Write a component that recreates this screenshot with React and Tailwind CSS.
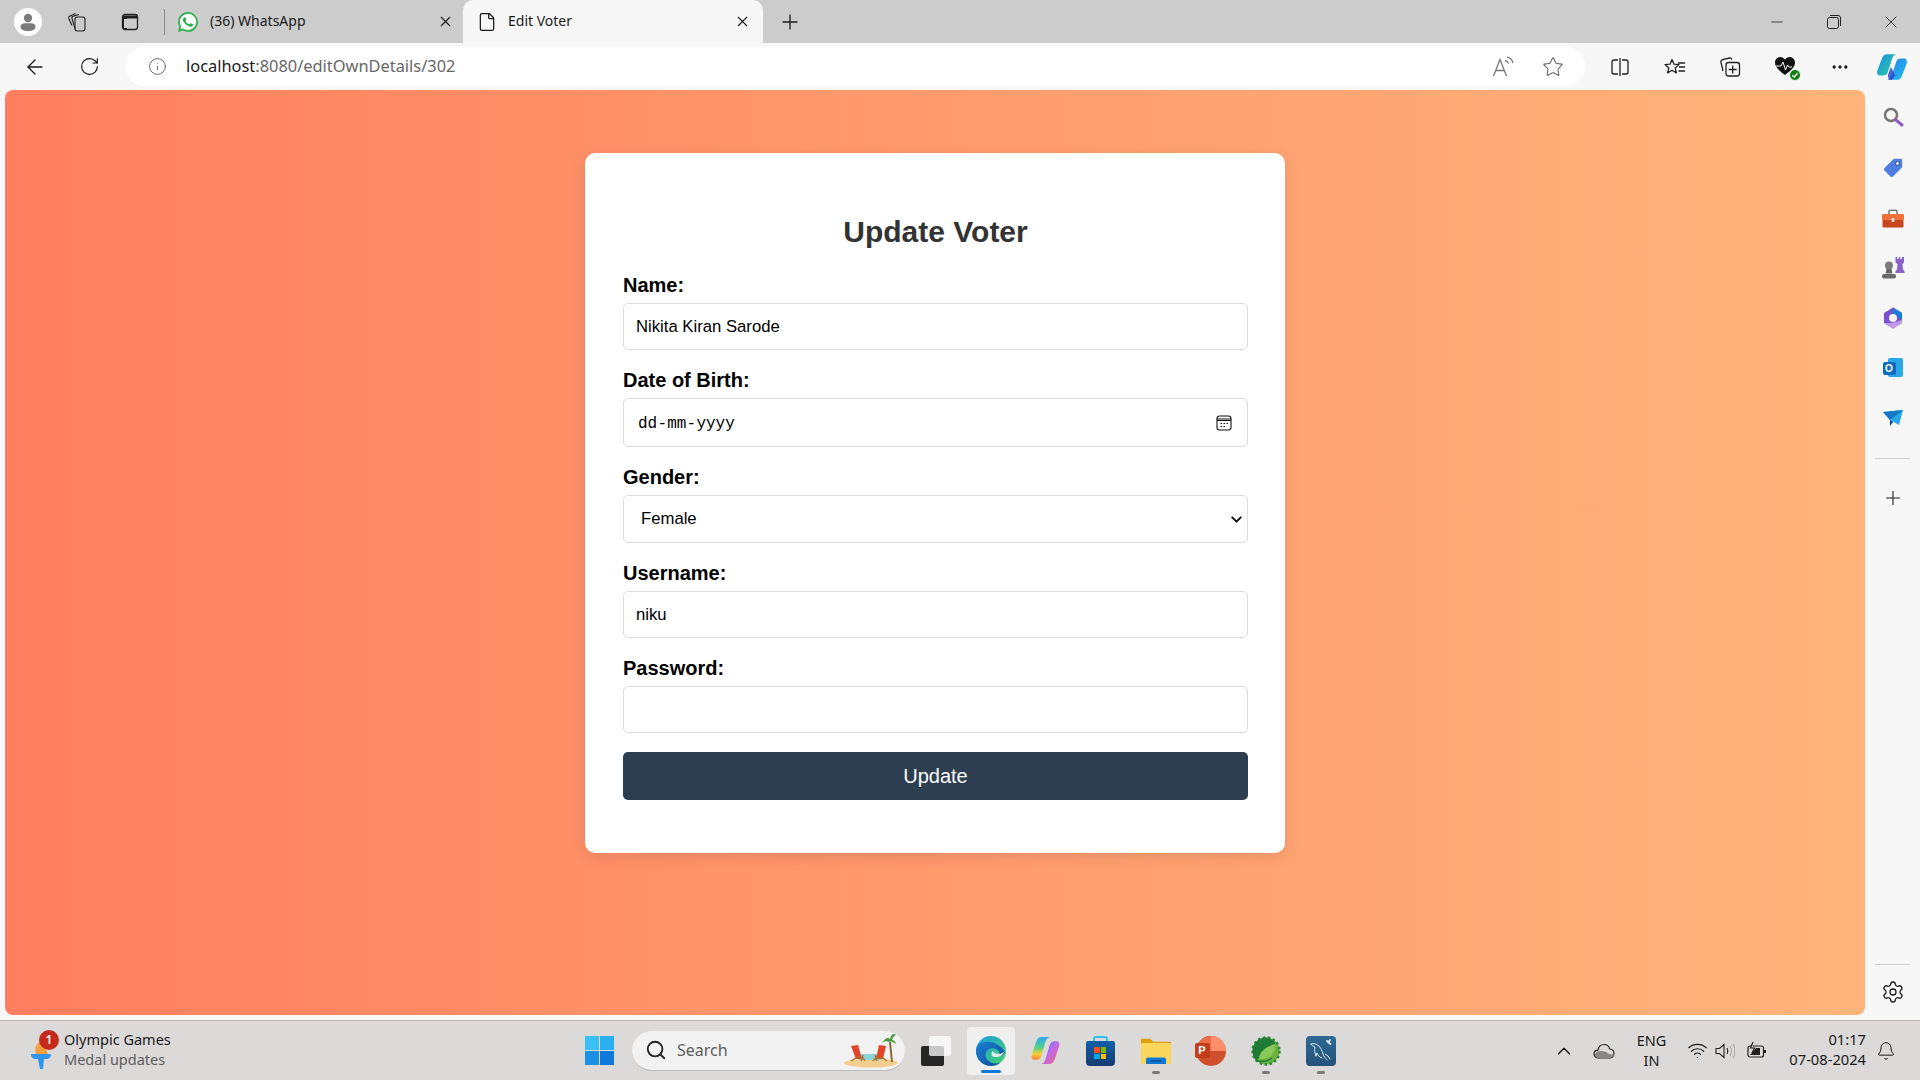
import React from 'react';
import { ArrowLeft, RotateCw, Info, Star, X, Plus, Minus, Ellipsis, Bell, ChevronUp, ChevronDown, Wifi, Search, File, Settings } from 'lucide-react';
import { SiWhatsapp } from 'react-icons/si';

const Slot = ({ w = 'w-[55px]', children }) => (
    <div className={`${w} h-full flex items-center justify-center shrink-0`}>{children}</div>
);

function Profile() {
    return (
        <div className="w-[28px] h-[28px] rounded-full bg-white flex items-center justify-center">
            <svg width="20" height="20" viewBox="0 0 20 20" fill="#7b7b7b">
                <circle cx="10" cy="6" r="4.2" />
                <path d="M2.5 15c0-2.6 2-3.8 4-3.8h7c2 0 4 1.2 4 3.8 0 2.6-3.500 4-7.500 4s-7.500-1.400-7.500-4z" />
            </svg>
        </div>
    );
}

function Workspaces() {
    return (
        <svg width="22" height="22" viewBox="0 0 22 22" fill="none" stroke="#222" strokeWidth="1.100">
            <rect x="9" y="6" width="10" height="14" rx="2.500" fill="#ccc" />
            <path d="M9 17.500 6 7.500C5.700 6.300 6.200 5.400 7.300 5.100L13 3.500" />
            <path d="M6 14.500 2.800 7.500c-.4-1.100.1-2 1.100-2.400L9.500 2.500" />
        </svg>
    );
}

function TabsIcon() {
    return (
        <svg width="18" height="18" viewBox="0 0 18 18" fill="none" stroke="#222" strokeWidth="1.300">
            <rect x="1.500" y="1.500" width="15" height="15" rx="2.500" />
            <path d="M2 2.500h14v3H6v10.500H2z" fill="#222" stroke="none" />
            <rect x="3" y="6" width="3" height="9" fill="#ccc" stroke="none" />
        </svg>
    );
}

function ReadAloud() {
    return (
        <svg width="24" height="22" viewBox="0 0 24 22" fill="none" stroke="#777" strokeWidth="1.300">
            <path d="M1.500 20 8 3.500 14.500 20M3.800 14.500h8.500" />
            <path d="M13 4.500c1.600.3 2.900 1.400 3.500 3M15 1.200c3 .5 5.300 2.800 6 6" />
        </svg>
    );
}

function SplitIcon() {
    return (
        <svg width="20" height="20" viewBox="0 0 20 20" fill="none" stroke="#222" strokeWidth="1.300">
            <path d="M8 3H4C2.700 3 2 3.800 2 5v10c0 1.200.7 2 2 2h4" />
            <path d="M12 3h4c1.300 0 2 .8 2 2v10c0 1.200-.7 2-2 2h-4" />
            <path d="M10 1v18" />
        </svg>
    );
}

function Favorites() {
    return (
        <svg width="22" height="20" viewBox="0 0 22 20" fill="none" stroke="#222" strokeWidth="1.300" strokeLinejoin="round">
            <path d="M8 2.500 10 7.200l5 .4-3.800 3.300 1.200 5L8 13.200l-4.400 2.700 1.200-5L1 7.600l5-.4z" />
            <path d="M14 6h7M15 10h6M14.500 14h6.500" />
        </svg>
    );
}

function Collections() {
    return (
        <svg width="22" height="22" viewBox="0 0 22 22" fill="none" stroke="#222" strokeWidth="1.300">
            <path d="M4 15 2 6.500C1.700 5 2.500 4 3.800 3.700L10.500 2c1.200-.2 2 .2 2.500 1.500" />
            <rect x="7" y="6.500" width="13.500" height="13.500" rx="2.500" fill="#f7f7f7" />
            <path d="M13.700 9.500v8M9.700 13.500h8" />
        </svg>
    );
}

function Health() {
    return (
        <div className="relative w-[24px] h-[24px] ml-[2px]">
            <svg width="22" height="20" viewBox="0 0 22 20" className="absolute left-0 top-[1px]">
                <path d="M11 19C5 14.500 1 11 1 6.500 1 3.500 3.300 1 6.200 1 8.200 1 10 2 11 3.800 12 2 13.800 1 15.800 1 18.700 1 21 3.500 21 6.500 21 11 17 14.500 11 19z" fill="#111" />
                <path d="M2 10h5l2-4 2.500 8 2-5 1.500 2h3" fill="none" stroke="#f7f7f7" strokeWidth="1" />
            </svg>
            <div className="absolute right-[-3px] bottom-[-2px] w-[12px] h-[12px] rounded-full bg-[#107c10] border border-[#f7f7f7] flex items-center justify-center">
                <svg width="8" height="8" viewBox="0 0 8 8" fill="none" stroke="#fff" strokeWidth="1.300"><path d="M1.200 4.200 3.200 6 6.800 2" /></svg>
            </div>
        </div>
    );
}

function Copilot() {
    return (
        <svg width="32" height="32" viewBox="0 0 30 30">
            <defs>
                <linearGradient id="cpA" x1="0" y1="0" x2="1" y2="1">
                    <stop offset="0" stopColor="#1a8fe0" />
                    <stop offset="1" stopColor="#2ccfa5" />
                </linearGradient>
                <linearGradient id="cpB" x1="0" y1="0" x2="1" y2="1">
                    <stop offset="0" stopColor="#2a7fe8" />
                    <stop offset="1" stopColor="#20c0f0" />
                </linearGradient>
            </defs>
            <path d="M10 3h9c-3 1-4 4-5 8l-3 9c-.8 2.500-2.500 3-4.500 3H4C1.500 23 .5 21 1.200 18.500L5.500 7C6.500 4.300 8 3 10 3z" fill="url(#cpA)" />
            <path d="M20 27h-9c3-1 4-4 5-8l3-9c.8-2.500 2.500-3 4.500-3H26c2.500 0 3.500 2 2.800 4.500L24.500 23c-1 2.700-2.500 4-4.500 4z" fill="url(#cpB)" />
            <path d="M11 23l3-8 4 8-3 4h-3z" fill="#2848c8" opacity=".85" />
        </svg>
    );
}

function ColorCopilot() {
    return (
        <svg width="31" height="31" viewBox="0 0 30 30">
            <defs>
                <linearGradient id="ccA" x1="0" y1="0" x2="0" y2="1">
                    <stop offset="0" stopColor="#30a8f0" />
                    <stop offset=".45" stopColor="#50d088" />
                    <stop offset=".75" stopColor="#f8d030" />
                    <stop offset="1" stopColor="#f88040" />
                </linearGradient>
                <linearGradient id="ccB" x1="0" y1="0" x2="1" y2="1">
                    <stop offset="0" stopColor="#5080f8" />
                    <stop offset=".5" stopColor="#c068e8" />
                    <stop offset="1" stopColor="#f86868" />
                </linearGradient>
            </defs>
            <path d="M11 2h8c-3 1-4 4-5 8l-3 10c-.8 2.500-2.500 4-4.500 4H4.500C2 24 1 22 1.700 19.500L6 6.500C7 3.300 9 2 11 2z" fill="url(#ccA)" />
            <path d="M19 28h-8c3-1 4-4 5-8l3-10c.8-2.500 2.500-4 4.500-4h2c2.500 0 3.500 2 2.800 4.500L24 23.500C23 26.700 21 28 19 28z" fill="url(#ccB)" />
        </svg>
    );
}

function SideSearch() {
    return (
        <svg width="22" height="22" viewBox="0 0 22 22" fill="none">
            <circle cx="9" cy="9" r="6" stroke="#777" strokeWidth="2.500" />
            <path d="M14 14l6 5" stroke="#8a5cc8" strokeWidth="3" strokeLinecap="round" />
        </svg>
    );
}

function SideTag() {
    return (
        <svg width="22" height="22" viewBox="0 0 22 22" className="mt-[2px]">
            <path d="M11 2.500c.5-.5 1-.7 1.700-.7h6c1 0 1.500.6 1.500 1.500v6c0 .7-.2 1.200-.7 1.700l-8.500 8.500c-.8.8-1.800.8-2.600 0L2.500 13.600c-.8-.8-.8-1.800 0-2.600z" fill="#4f7ee0" />
            <circle cx="15.500" cy="6.500" r="2" fill="#fff" stroke="#23418e" strokeWidth="1" />
        </svg>
    );
}

function SideToolbox() {
    return (
        <svg width="24" height="22" viewBox="0 0 24 22" className="mt-[3px]">
            <path d="M8 6V3.500c0-.8.500-1.300 1.300-1.300h5.400c.8 0 1.300.5 1.300 1.300V6" fill="none" stroke="#777" strokeWidth="1.500" />
            <rect x="1" y="6" width="22" height="6.500" rx="1" fill="#f0703a" />
            <rect x="1.500" y="12" width="21" height="7.500" rx="1" fill="#c8471c" />
            <rect x="10.500" y="10" width="3" height="4" rx=".7" fill="#d8d8d8" />
        </svg>
    );
}

function SideChess() {
    return (
        <svg width="24" height="24" viewBox="0 0 24 24">
            <path d="M14.500 1h1.700v2h1.500V1h1.600v2H21V1h2v5.500l-1.500 1.500.5 5.500 1.500 1.500V17h-9v-2l1.500-1.500.5-5.500-2-1.500z" fill="#8a62c8" />
            <circle cx="8" cy="9.500" r="4" fill="#7c7c7c" />
            <path d="M5.500 13h5l1 4.500h-7z" fill="#666" />
            <rect x="1" y="18" width="14" height="4.500" rx="2" fill="#6a6a6a" />
        </svg>
    );
}

function SideM365() {
    return (
        <svg width="22" height="24" viewBox="0 0 22 24" fill="none">
            <path d="M11 1.500 20 7v10l-9 5.500L2 17V7z" fill="#7a50d0" />
            <path d="M11 1.500 20 7v7l-6-4-4-3z" fill="#1f7ad8" />
            <path d="M2 17l9 5.500 9-5.500v-3l-6 2-5 1z" fill="#c09ae8" />
            <circle cx="11" cy="12" r="4" fill="#f7f7f7" />
        </svg>
    );
}

function SideOutlook() {
    return (
        <div className="relative w-[20px] h-[20px]">
            <div className="absolute right-0 top-0 w-[15px] h-[19px] bg-[#28a8ea] rounded-[2px]" />
            <div className="absolute left-0 top-[4px] w-[13px] h-[13px] bg-[#0f6cbd] rounded-[2px] flex items-center justify-center text-white text-[10px] font-bold font-['Liberation_Sans',sans-serif]">O</div>
        </div>
    );
}

function SideSend() {
    return (
        <svg width="22" height="18" viewBox="0 0 22 18">
            <path d="M1 3 21 1 17 16 8 11z" fill="#28a8ea" />
            <path d="M1 3 21 1 8 11z" fill="#1579c8" />
            <path d="M8 11v6l3-4z" fill="#0b3e8a" />
        </svg>
    );
}

function SideItem({ children }) {
    return <div className="h-[50.200px] flex items-center justify-center shrink-0">{children}</div>;
}

function Field({ label, children }) {
    return (
        <div className="mb-[19px]">
            <label className="block h-[22px] leading-[22px] mb-[7px] text-[20px] font-bold text-black">{label}</label>
            {children}
        </div>
    );
}

function TextInput({ value, type = 'text' }) {
    return (
        <input
            type={type}
            value={value}
            readOnly
            className="block w-full h-[47px] px-[12px] bg-white border border-[#dddddd] rounded-[5px] text-[16.700px] text-black outline-none"
        />
    );
}

function UpdateCard() {
    return (
        <div className="w-[700px] h-[700px] bg-white rounded-[10px] pt-[62px] pl-[38px] pr-[37px] shadow-[0_4px_15px_rgba(0,0,0,0.1)] font-['Liberation_Sans',sans-serif]">
            <h1 className="h-[34px] leading-[34px] mb-[25px] text-[30px] font-bold text-center text-[#333333]">Update Voter</h1>
            <Field label="Name:">
                <TextInput value="Nikita Kiran Sarode" />
            </Field>
            <Field label="Date of Birth:">
                <div className="h-[49px] pl-[14px] pr-[15px] border border-[#dddddd] rounded-[5px] flex items-center justify-between">
                    <div className="flex text-[16px] text-black font-['Liberation_Mono',monospace] pt-[2px]">
                        <span>dd</span>
                        <span className="w-[10px] text-center">-</span>
                        <span>mm</span>
                        <span className="w-[10px] text-center">-</span>
                        <span>yyyy</span>
                    </div>
                    <svg width="16" height="16" viewBox="0 0 16 16" fill="none" stroke="#111" strokeWidth="1.100">
                        <rect x="1" y="1" width="14" height="14" rx="2.500" />
                        <path d="M1 4h14M1 5.500h14" />
                        <path d="M4.500 8.500h1.500M7.500 8.500h1.500M10.500 8.500h1.500M4.500 11.500h1.500M7.500 11.500h1.500" />
                    </svg>
                </div>
            </Field>
            <Field label="Gender:">
                <div className="relative">
                    <select defaultValue="Female" className="block w-full h-[48px] pl-[17px] pr-[12px] bg-white border border-[#dddddd] rounded-[5px] text-[16.700px] text-black outline-none appearance-none">
                        <option>Male</option>
                        <option>Female</option>
                        <option>Other</option>
                    </select>
                    <ChevronDown size={17} strokeWidth={2.800} color="#111" className="absolute right-[3px] top-[16px] pointer-events-none" />
                </div>
            </Field>
            <Field label="Username:">
                <div className="pb-0"><TextInput value="niku" /></div>
            </Field>
            <Field label="Password:">
                <TextInput value="" type="password" />
            </Field>
            <button className="block w-full h-[48px] pb-[1px] bg-[#2c3e50] rounded-[5px] text-[20px] text-white">Update</button>
        </div>
    );
}

function StartIcon() {
    return (
        <div className="grid grid-cols-2 gap-[1px] w-[29px] h-[29px]">
            <div className="bg-[#38c0f4]" />
            <div className="bg-[#2ab0f0]" />
            <div className="bg-[#1b90e4]" />
            <div className="bg-[#0f78d8]" />
        </div>
    );
}

function TaskView() {
    return (
        <div className="relative w-[30px] h-[30px]">
            <div className="absolute left-0 bottom-0 w-[23px] h-[20px] bg-[#262626] rounded-[2px]" />
            <div className="absolute right-0 top-0 w-[22px] h-[20px] bg-white/75 rounded-[2px]" />
        </div>
    );
}

function EdgeIcon() {
    return (
        <svg width="32" height="32" viewBox="0 0 32 32">
            <defs>
                <linearGradient id="edA" x1="0" y1="0" x2="1" y2="1">
                    <stop offset="0" stopColor="#1b9de2" />
                    <stop offset="1" stopColor="#45d36a" />
                </linearGradient>
                <linearGradient id="edB" x1="0" y1="0" x2="1" y2="1">
                    <stop offset="0" stopColor="#1d7ed4" />
                    <stop offset="1" stopColor="#0c4b9a" />
                </linearGradient>
            </defs>
            <circle cx="16" cy="16" r="15" fill="url(#edA)" />
            <path d="M1 16C1 24.300 7.700 31 16 31c3.500 0 6.500-1 9-3-4 1-9 .5-12-2.500-3-3-3.500-7-1-10 2-2.500 6-3 9-1.500 3 1.600 4 3.500 3 5.500-.6 1.200-1.800 1.800-3.500 1.500 3 .5 8-.5 9.500-4-1-2-7-10-16-10C6 6 1 10 1 16z" fill="url(#edB)" />
            <path d="M17 21c2 1.500 6 1.500 9-.3 1.500-1 2.800-2.500 3.500-4.700-1.200 2-3.600 3-6.500 2.800-2.400-.2-4.400-1.200-5.500-2.800-1 1.500-1.200 3.500-.5 5z" fill="#f0f0f0" opacity=".9" />
        </svg>
    );
}

function StoreIcon() {
    return (
        <div className="relative w-[30px] h-[30px]">
            <div className="absolute left-[7px] top-0 w-[15px] h-[8px] border-2 border-b-0 border-[#30c0f0] rounded-t-[3px]" />
            <div className="absolute left-0 bottom-0 w-[29px] h-[25px] rounded-b-[4px] rounded-t-[2px] bg-gradient-to-b from-[#0f5fa8] to-[#143d70] flex items-center justify-center">
                <div className="grid grid-cols-2 gap-[1px] w-[12px] h-[12px]">
                    <div className="bg-[#f25022]" />
                    <div className="bg-[#7fba00]" />
                    <div className="bg-[#00a4ef]" />
                    <div className="bg-[#ffb900]" />
                </div>
            </div>
        </div>
    );
}

function FolderIcon() {
    return (
        <svg width="30" height="30" viewBox="0 0 30 30">
            <path d="M0 4c0-.8.5-1.300 1.300-1.300h8l3 3H30v3H0z" fill="#dca00c" />
            <rect x="0" y="7" width="30" height="21" rx="1" fill="#fbd65c" />
            <path d="M5 28v-4.500c0-1 .8-2 2-2h16c1.200 0 2 1 2 2V28z" fill="#0f78d4" />
            <path d="M10 25h10" stroke="#063c72" strokeWidth="1" />
        </svg>
    );
}

function PowerPointIcon() {
    return (
        <div className="relative w-[30px] h-[30px]">
            <svg width="30" height="30" viewBox="0 0 30 30" className="absolute left-0 top-0">
                <circle cx="15" cy="15" r="15" fill="#d0502e" />
                <path d="M15 15V0a15 15 0 0 1 15 15z" fill="#ff8f6b" />
                <path d="M15 0a15 15 0 0 0-15 15h15z" fill="#ed6c47" />
            </svg>
            <div className="absolute left-[-1px] top-[7px] w-[15px] h-[15px] rounded-[2px] bg-[#c43e1c] flex items-center justify-center text-white text-[11px] font-bold font-['Liberation_Sans',sans-serif]">P</div>
        </div>
    );
}

function SpringIcon() {
    return (
        <svg width="30" height="30" viewBox="0 0 30 30">
            <circle cx="15" cy="15" r="13.500" fill="#6db33f" />
            <circle cx="15" cy="15" r="13.500" fill="none" stroke="#2b8a3a" strokeWidth="2.500" strokeDasharray="2.500 2.500" />
            <path d="M15 1.500C7.500 1.500 1.500 7.500 1.500 15c0 4 1.500 7.500 4 10 3-4 6-8 11-10.500 3-1.500 6-3.500 8-8C21 3.500 18 1.500 15 1.500z" fill="#1f7a35" />
            <path d="M8 22c1-6 6-11 16-14 .5 6-2 12-8 14-3 1-6 1-8 0z" fill="#8ac85a" />
            <path d="M6 25c3 .5 10 .5 15-3" stroke="#1f7a35" strokeWidth="1.500" fill="none" />
        </svg>
    );
}

function MysqlIcon() {
    return (
        <div className="w-[30px] h-[30px] rounded-[4px] bg-gradient-to-b from-[#2d6a94] to-[#24527a] flex items-center justify-center">
            <svg width="26" height="26" viewBox="0 0 26 26" fill="none" stroke="#dfe8ee" strokeWidth="1" strokeLinecap="round">
                <path d="M3 6c3-1 6 0 8 2 2 2 3 5 4 8 .5 2 2 4 4 6" />
                <path d="M3 6c1 2 2 2 4 3-1 3 0 6 1 9M8 18l1-3c1 2 2 4 5 5" />
                <path d="M19 3l1.500 1.500M22 2l-1.500 2.500 2 1.500" strokeWidth="1.800" />
                <path d="M17 16l3 2 2 3" />
            </svg>
        </div>
    );
}

function BeachIcon() {
    return (
        <svg width="56" height="36" viewBox="0 0 56 36">
            <ellipse cx="28" cy="31" rx="27" ry="4.500" fill="#f2cf8e" />
            <rect x="16" y="22" width="22" height="6" fill="#8ed3d8" />
            <path d="M8 14l7-1 4 14h-6z" fill="#e2462a" />
            <path d="M8 29l5-3h7l2 3M18 29l2-6" stroke="#a8702a" strokeWidth="1.300" fill="none" />
            <path d="M36 13l7 1-3 13h-7z" fill="#e2462a" />
            <path d="M30 29l3-3h7l4 3M34 29l-2-6" stroke="#a8702a" strokeWidth="1.300" fill="none" />
            <path d="M49 30 47 10" stroke="#8a6a30" strokeWidth="2" />
            <path d="M39 11c3-5 6-6 8-4 1-5 4-6 6-4-2 1-3 2-4 5 2 0 3 1 4 4-3-2-5-3-7-2-2-1-5-1-7 1z" fill="#4f9a3a" />
        </svg>
    );
}

function TaskItem({ active, dot, children }) {
    return (
        <div className={`relative w-[48px] h-[48px] mx-[3.500px] rounded-[4px] flex items-center justify-center shrink-0 ${active ? 'bg-[#efefef]' : ''}`}>
            {children}
            {active && <div className="absolute bottom-[2px] left-[14px] w-[20px] h-[3px] rounded-full bg-[#0f78d4]" />}
            {dot && <div className="absolute bottom-[1px] left-[20px] w-[8px] h-[3px] rounded-full bg-[#7a7a7a]" />}
        </div>
    );
}

export default function App() {
    return (
        <div className="w-[1920px] h-[1080px] overflow-hidden flex flex-col bg-[#f7f7f7] font-['Noto_Sans',sans-serif] text-[#1a1a1a]">
            {/* tab strip */}
            <div className="h-[43px] bg-[#cccccc] flex items-center shrink-0">
                <div className="w-[56px] flex justify-center"><Profile /></div>
                <div className="w-[42px] flex justify-center"><Workspaces /></div>
                <div className="w-[64px] flex justify-center"><TabsIcon /></div>
                <div className="w-px h-[26px] bg-[#8a8a8a] ml-[2px]" />
                <div className="w-[298px] h-full flex items-center pl-[14px] pr-[9px]">
                    <div className="w-[17px] h-[17px] rounded-full bg-white flex items-center justify-center"><SiWhatsapp size={20} color="#25b048" className="shrink-0" /></div>
                    <span className="ml-[14px] text-[14px] flex-1 pb-[2px]">(36) WhatsApp</span>
                    <X size={17} strokeWidth={1.500} />
                </div>
                <div className="w-[300px] h-full bg-[#f7f7f7] rounded-t-[10px] flex items-center pl-[14px] pr-[12px]">
                    <File size={20} strokeWidth={1.500} />
                    <span className="ml-[11px] text-[14px] flex-1 pb-[2px]">Edit Voter</span>
                    <X size={17} strokeWidth={1.500} />
                </div>
                <div className="w-[53px] flex justify-center"><Plus size={24} strokeWidth={1.300} /></div>
                <div className="ml-auto flex h-full">
                    <Slot w="w-[57px]"><Minus size={18} strokeWidth={1} /></Slot>
                    <Slot w="w-[57px]">
                        <svg width="14" height="14" viewBox="0 0 14 14" fill="none" stroke="#222" strokeWidth="1"><rect x=".5" y="2.500" width="11" height="11" rx="2" /><path d="M3 .5h8c1.500 0 2.500 1 2.500 2.500v8" /></svg>
                    </Slot>
                    <Slot w="w-[58px]"><X size={20} strokeWidth={1} /></Slot>
                </div>
            </div>

            {/* toolbar */}
            <div className="h-[47px] flex items-center shrink-0 pl-[7px]">
                <div className="h-full flex">
                    <Slot><ArrowLeft size={24} strokeWidth={1.300} /></Slot>
                    <Slot><RotateCw size={21} strokeWidth={1.300} /></Slot>
                </div>
                <div className="w-[1460px] h-[39px] ml-[8px] bg-white rounded-full flex items-center pl-[23px] pr-[22px]">
                    <Info size={19} strokeWidth={1.100} color="#555" />
                    <div className="ml-[19px] text-[16.400px] flex-1 pb-[1px]">localhost<span className="text-[#666666]">:8080/editOwnDetails/302</span></div>
                    <ReadAloud />
                    <div className="ml-[26px] mr-[-1px]"><Star size={22} strokeWidth={1.200} color="#666" /></div>
                </div>
                <div className="h-full flex ml-[7px]">
                    <Slot><SplitIcon /></Slot>
                    <Slot><Favorites /></Slot>
                    <Slot><Collections /></Slot>
                    <Slot><Health /></Slot>
                    <Slot><Ellipsis size={20} strokeWidth={2} /></Slot>
                    <Slot w="w-[50px]"><Copilot /></Slot>
                </div>
            </div>

            {/* page + sidebar */}
            <div className="flex-1 flex min-h-0">
                <main className="w-[1860px] ml-[5px] mb-[5px] rounded-[8px] bg-gradient-to-r from-[#ff7e5f] to-[#feb47b] flex justify-center pt-[63px]">
                    <UpdateCard />
                </main>
                <aside className="flex-1 flex flex-col pt-[2px] pb-[8px]">
                    <SideItem><SideSearch /></SideItem>
                    <SideItem><SideTag /></SideItem>
                    <SideItem><SideToolbox /></SideItem>
                    <SideItem><SideChess /></SideItem>
                    <SideItem><SideM365 /></SideItem>
                    <SideItem><SideOutlook /></SideItem>
                    <SideItem><SideSend /></SideItem>
                    <div className="w-[35px] h-px bg-[#cfcfcf] mx-auto mt-[15px]" />
                    <div className="h-[40px] mt-[19px] flex items-center justify-center"><Plus size={22} strokeWidth={1.200} /></div>
                    <div className="w-[35px] h-px bg-[#cfcfcf] mx-auto mt-auto" />
                    <div className="h-[40px] mt-[7px] flex items-center justify-center"><Settings size={24} strokeWidth={1.300} /></div>
                </aside>
            </div>

            {/* taskbar */}
            <div className="h-[60px] shrink-0 bg-[#dcd9d9] border-t border-[#b8b6b6] flex items-center">
                <div className="w-[585px] flex items-center pl-[29px] shrink-0">
                    <div className="relative w-[26px] h-[38px] shrink-0">
                        <svg width="24" height="36" viewBox="0 0 24 36" className="absolute left-0 top-[2px]">
                            <path d="M7 20c-2-5 0-9 4-13 0 3 2 4 5 6l3 7z" fill="#f4a040" />
                            <path d="M2 20h20c0 3-2 5-5 5H7c-3 0-5-2-5-5z" fill="#2f96f0" />
                            <path d="M9 25h6l-1 10h-3z" fill="#2f96f0" />
                        </svg>
                        <div className="absolute left-[10px] top-[-2px] w-[20px] h-[20px] rounded-full bg-[#c42b1c] text-white text-[12px] font-semibold flex items-center justify-center">1</div>
                    </div>
                    <div className="ml-[9px] text-[14.500px] leading-[20px] pb-[4px]">
                        <div>Olympic Games</div>
                        <div className="text-[#5c5c5c]">Medal updates</div>
                    </div>
                </div>
                <div className="w-[47px] flex justify-start"><StartIcon /></div>
                <div className="w-[273px] h-[40px] rounded-full bg-[#f3f2f2] border-b border-[#bbbbbb] flex items-center pl-[13px] pr-[6px] relative">
                    <Search size={22} strokeWidth={2} color="#222" />
                    <span className="ml-[10px] text-[16px] text-[#5c5c5c] flex-1">Search</span>
                    <BeachIcon />
                </div>
                <div className="ml-[3px] flex items-center">
                    <TaskItem><TaskView /></TaskItem>
                    <TaskItem active><EdgeIcon /></TaskItem>
                    <TaskItem><ColorCopilot /></TaskItem>
                    <TaskItem><StoreIcon /></TaskItem>
                    <TaskItem dot><FolderIcon /></TaskItem>
                    <TaskItem><PowerPointIcon /></TaskItem>
                    <TaskItem dot><SpringIcon /></TaskItem>
                    <TaskItem dot><MysqlIcon /></TaskItem>
                </div>
                <div className="ml-auto flex items-center h-full">
                    <Slot w="w-[40px]"><ChevronUp size={22} strokeWidth={1.500} /></Slot>
                    <Slot w="w-[40px]">
                        <svg width="22" height="16" viewBox="0 0 22 16" fill="none" stroke="#222" strokeWidth="1.200">
                            <path d="M5.500 15C3 15 1 13.400 1 11c0-2.200 1.700-3.800 4-3.800C5.600 3.800 8 1.500 11 1.500c2.800 0 5 1.800 5.700 4.500 2.500.2 4.300 2.200 4.300 4.600 0 2.600-2 4.400-4.500 4.400z" />
                            <path d="M2 11c1-2 3-3 6-3 3 0 6 1 8 3 2 .5 4 .5 5 .5-.5 2-2 3.500-4.500 3.500H5.500C3.500 15 2 13.500 2 11z" fill="#888" stroke="none" />
                        </svg>
                    </Slot>
                    <div className="w-[55px] text-center text-[14.500px] leading-[20px] pb-[2px]">ENG<br />IN</div>
                    <Slot w="w-[36px]"><Wifi size={21} strokeWidth={1.400} /></Slot>
                    <Slot w="w-[20px]">
                        <svg width="20" height="18" viewBox="0 0 20 18" fill="none" stroke="#222" strokeWidth="1.100">
                            <path d="M1 6.500v5h3.500L9 15.500v-13L4.500 6.500z" />
                            <path d="M12 6c1 1.800 1 4.200 0 6" />
                            <path d="M15 4c1.800 3 1.800 7 0 10M18 2c2.500 4 2.500 10 0 14" stroke="#aaa" />
                        </svg>
                    </Slot>
                    <Slot w="w-[44px]">
                        <svg width="20" height="20" viewBox="0 0 20 20" fill="none" stroke="#222" strokeWidth="1.200">
                            <rect x="1" y="5" width="15.500" height="11" rx="2" />
                            <path d="M18 9v3" strokeWidth="2" />
                            <path d="M3 14l6-7h4v7z" fill="#222" stroke="none" />
                            <path d="M6 1 3.500 7h4L5 12" fill="#dcd9d9" />
                        </svg>
                    </Slot>
                    <div className="w-[87px] text-right text-[14.700px] leading-[20px] mr-[10px] pb-[4px]">
                        <div>01:17</div>
                        <div>07-08-2024</div>
                    </div>
                    <Bell size={20} strokeWidth={1.200} />
                    <div className="w-[24px]" />
                </div>
            </div>
        </div>
    );
}
